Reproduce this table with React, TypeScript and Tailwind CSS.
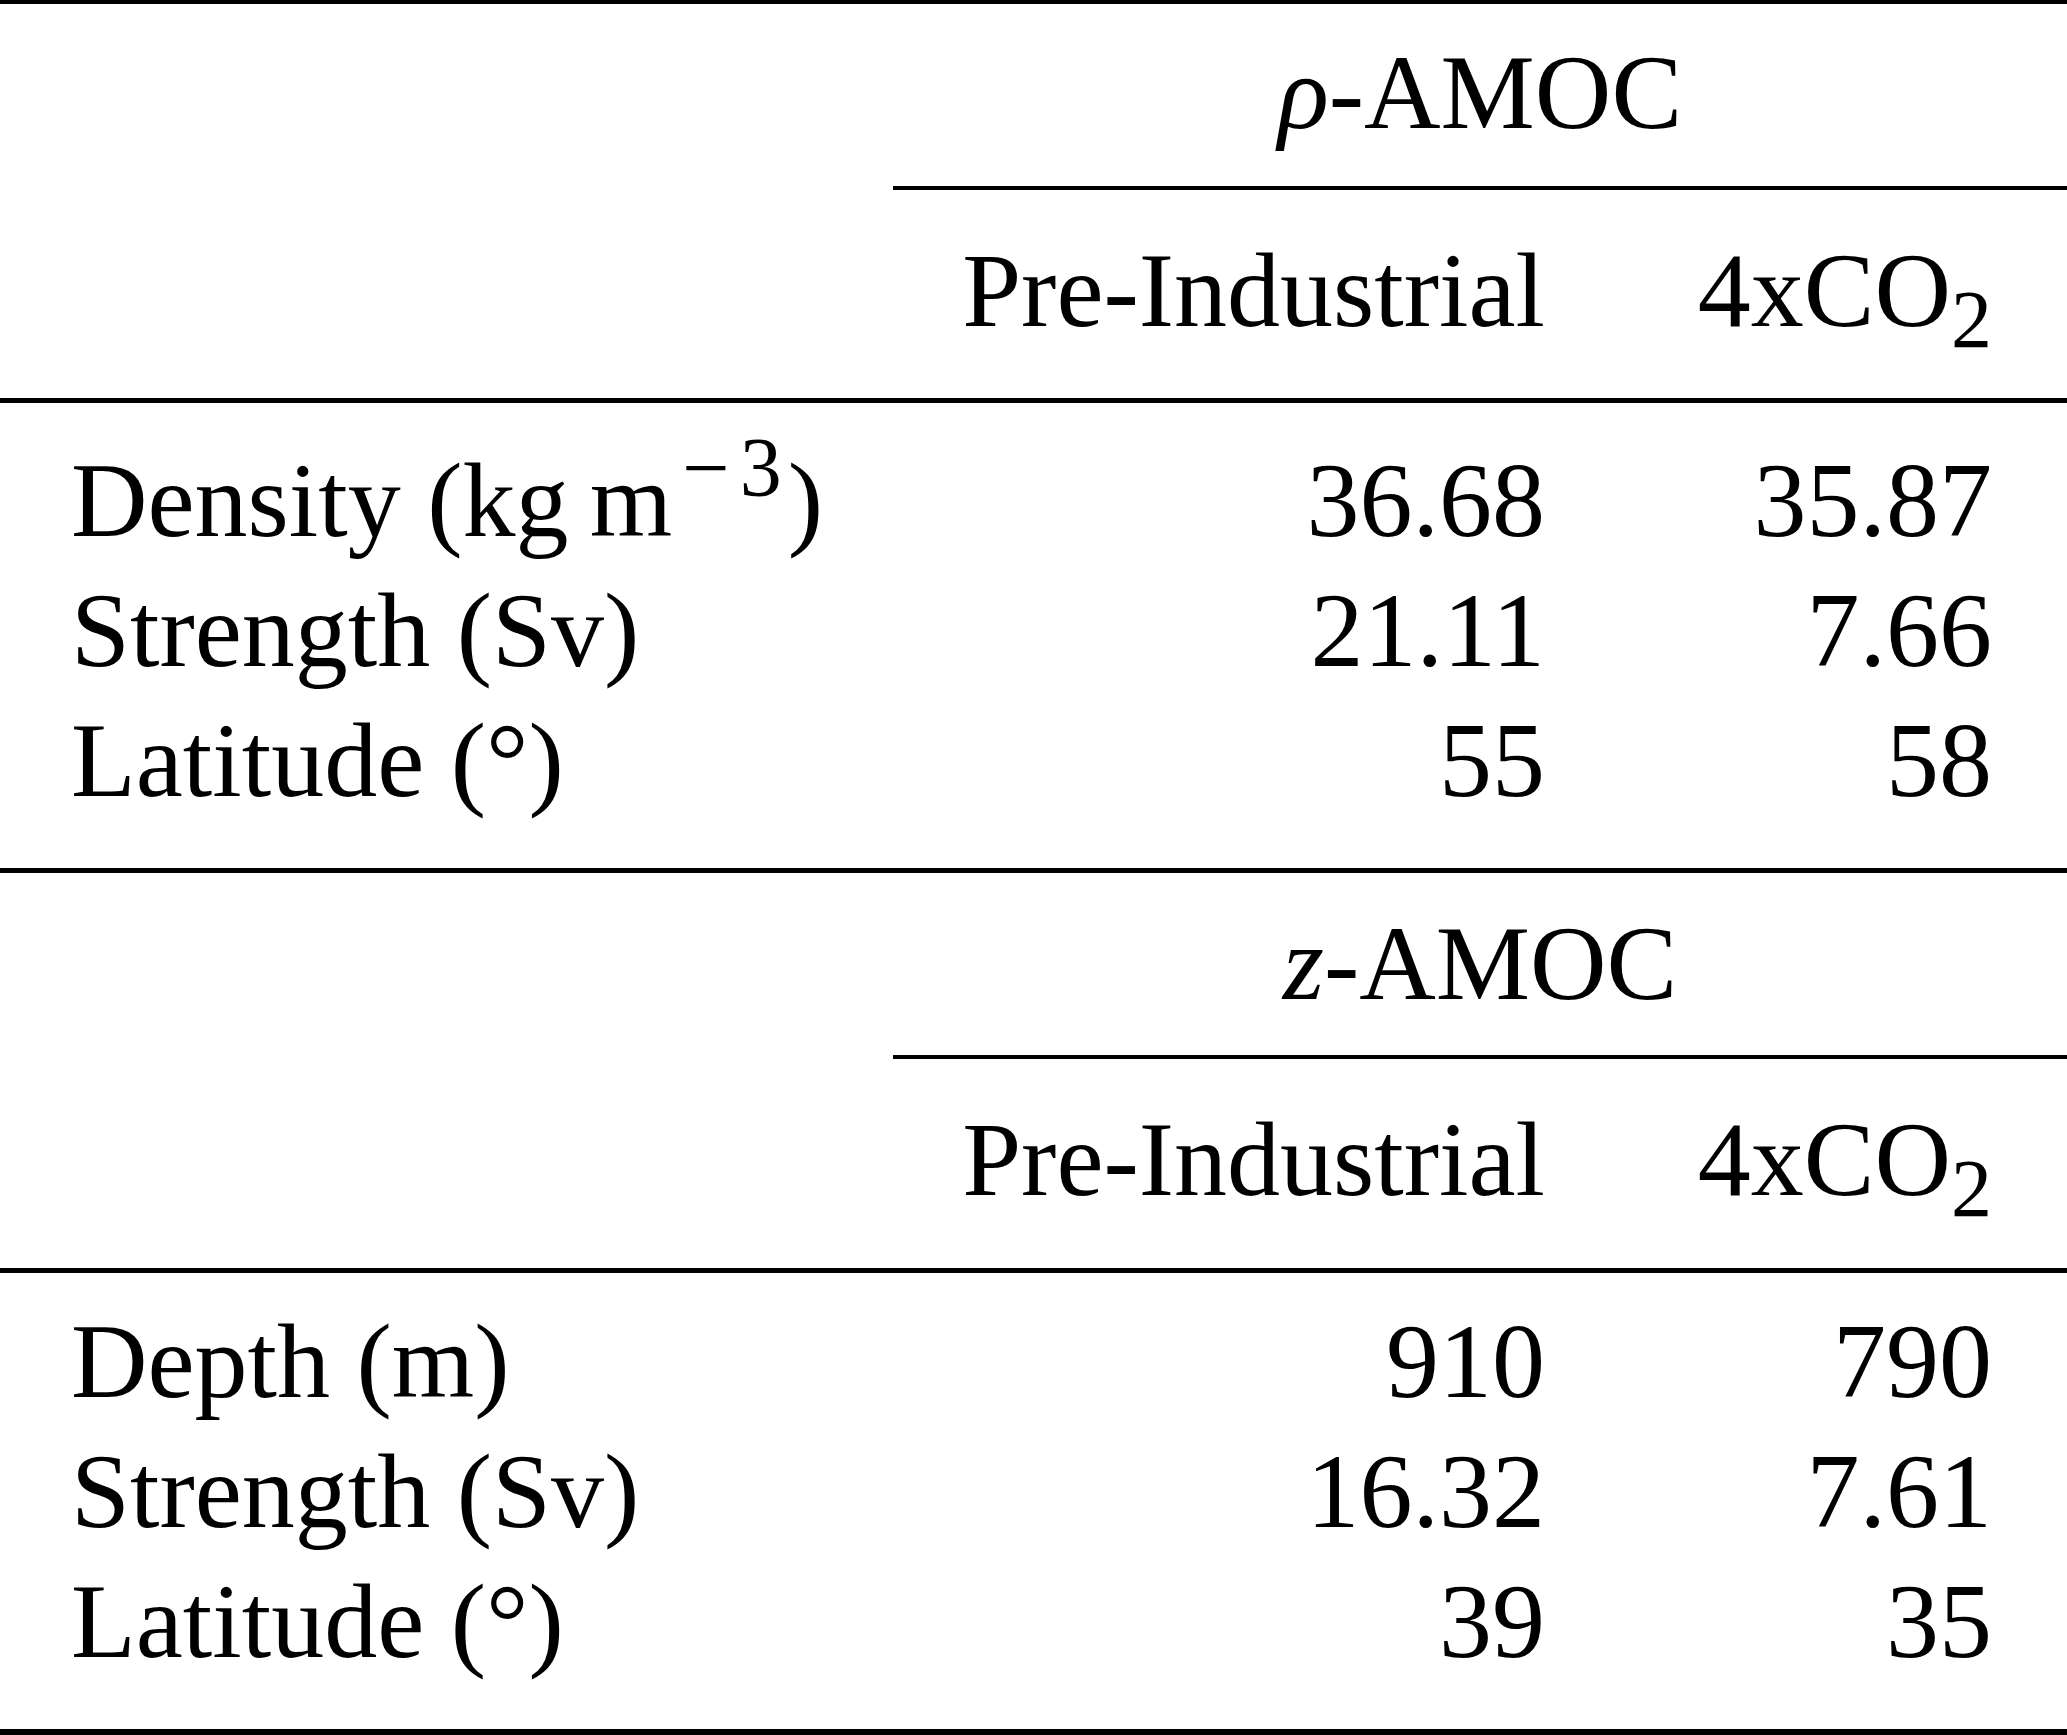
import React from 'react';

type Row = { label: React.ReactNode; pi: string; co2: string };

const rhoRows: Row[] = [
  {
    label: (
      <>
        Density (kg{'\u2009'}m
        <span className="text-[84px] leading-[0] align-[40px] ml-[10px]">
          {'\u2212'}
          <span className="ml-[10px]">3</span>
        </span>
        <span className="ml-[6px]">)</span>
      </>
    ),
    pi: '36.68',
    co2: '35.87',
  },
  { label: 'Strength (Sv)', pi: '21.11', co2: '7.66' },
  { label: 'Latitude (°)', pi: '55', co2: '58' },
];

const zRows: Row[] = [
  { label: 'Depth (m)', pi: '910', co2: '790' },
  { label: 'Strength (Sv)', pi: '16.32', co2: '7.61' },
  { label: 'Latitude (°)', pi: '39', co2: '35' },
];

const grid = 'grid grid-cols-[893px_725px_449px] h-[130px] leading-[130px] whitespace-nowrap';

const Header = () => (
  <>
    <div />
    <div className="text-right pr-[73px]">Pre-Industrial</div>
    <div className="text-right pr-[75px]">
      4xCO
      <span className="text-[82px] leading-[0] align-[-21px]">2</span>
    </div>
  </>
);

const DataRows = ({ rows }: { rows: Row[] }) => (
  <div>
    {rows.map((r, i) => (
      <div key={i} className={grid}>
        <div className="pl-[71px]">{r.label}</div>
        <div className="text-right pr-[73px]">{r.pi}</div>
        <div className="text-right pr-[75px]">{r.co2}</div>
      </div>
    ))}
  </div>
);

const App = () => {
  return (
    <div className="w-[2067px] bg-white text-black font-['Liberation_Serif','Times_New_Roman',serif] text-[106px]">
      {/* top rule */}
      <div className="h-[4px] bg-black" />

      {/* rho-AMOC block */}
      <div className={`${grid} mt-[24px]`}>
        <div />
        <div className="col-span-2 text-center">
          <span className="italic">ρ</span>-AMOC
        </div>
      </div>
      <div className="mt-[28px] ml-[893px] h-[4px] bg-black" />
      <div className={`${grid} mt-[36px]`}>
        <Header />
      </div>
      <div className="mt-[42px] h-[5px] bg-black" />
      <div className="mt-[33px]">
        <DataRows rows={rhoRows} />
      </div>
      <div className="mt-[42px] h-[5px] bg-black" />

      {/* z-AMOC block */}
      <div className={`${grid} mt-[26px]`}>
        <div />
        <div className="col-span-2 text-center">
          <span className="italic">z</span>-AMOC
        </div>
      </div>
      <div className="mt-[26px] ml-[893px] h-[4px] bg-black" />
      <div className={`${grid} mt-[36px]`}>
        <Header />
      </div>
      <div className="mt-[43px] h-[5px] bg-black" />
      <div className="mt-[24px]">
        <DataRows rows={zRows} />
      </div>

      {/* bottom rule */}
      <div className="mt-[42px] h-[6px] bg-black" />
    </div>
  );
};

export default App;
